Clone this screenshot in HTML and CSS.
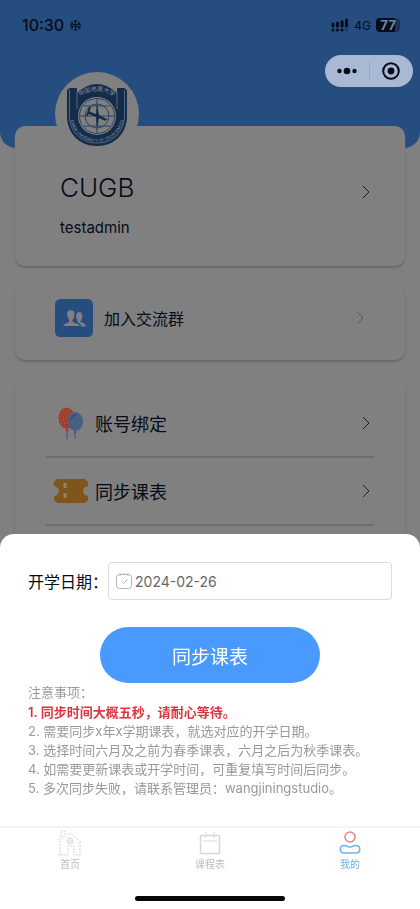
FILE: index.html
```html
<!DOCTYPE html>
<html lang="zh-CN">
<head>
<meta charset="utf-8">
<meta name="viewport" content="width=device-width, initial-scale=1">
<title>我的</title>
<link rel="stylesheet" href="styles.css">
</head>
<body>
<div class="app">
  <main class="page">
    <header class="hero">
      <div class="status">
        <div class="status-group">
          <span class="clock">10:30</span>
          <svg class="snow" viewBox="0 0 14 14" aria-hidden="true"><path d="M7 1v12M1.800 4l10.400 6M12.200 4L1.800 10M5 1.500l2 2 2-2M5 12.500l2-2 2 2M1 6.500L4 6 3 3M13 7.500L10 8l1 3M1 7.500L4 8l-1 3M13 6.500L10 6l1-3"/></svg>
        </div>
        <div class="status-group">
          <svg class="signal" viewBox="0 0 18 14" aria-hidden="true"><path d="M2 6v2M6.500 5v3M11 3.500V8M15.500 2v6"/><path d="M2 12v.1M6.500 12v.1M11 12v.1"/><path class="faint" d="M15.500 12v.1"/></svg>
          <span class="network">4G</span>
          <span class="battery">77</span>
        </div>
      </div>
    </header>

    <section class="card profile">
      <svg class="avatar" viewBox="0 0 84 84" role="img" aria-label="校徽">
        <defs>
          <path id="arc-top" d="M23 26Q42 12 61 26"/>
          <path id="arc-bottom" d="M15 43A27 27 0 0 0 69 43"/>
        </defs>
        <circle class="disc" cx="42" cy="42" r="42"/>
        <path class="navy" d="M12 18l3-2h7v5q20-18 40 0v-5h7l3 2v26c0 17-12 30-30 30S12 61 12 44z"/>
        <path class="trim" d="M14.500 18v26c0 15 11 27 27.500 27s27.500-12 27.500-27V18M22 20v17M62 20v17"/>
        <circle class="disc" cx="42" cy="44" r="19"/>
        <g class="globe">
          <circle cx="42" cy="44" r="17.500"/><circle cx="42" cy="44" r="12"/>
          <path d="M25 44h34M29 34h26M29 54h26M42 27v34"/>
        </g>
        <path class="navy" d="M42 32l2 11 10 5-10-2-2 11-1-12-9-4 9 1z"/>
        <path class="hammer" d="M33 40l18 8M35 35l-3 9"/>
        <text class="seal-cn"><textPath href="#arc-top" startOffset="50%">中国地质大学</textPath></text>
        <text class="seal-en"><textPath href="#arc-bottom" startOffset="50%">CHINA UNIVERSITY OF GEOSCIENCES</textPath></text>
      </svg>
      <div class="identity">
        <h1 class="name">CUGB</h1>
        <p class="account">testadmin</p>
      </div>
      <svg class="chevron" viewBox="0 0 10 16" aria-hidden="true"><path d="M2 2l6 6-6 6"/></svg>
    </section>

    <a class="card group" href="#">
      <svg class="people" viewBox="0 0 36 36" aria-hidden="true"><rect width="36" height="36" rx="5"/><path d="M22 20c2 3 7 2 7 6h-4c0-2-2-3-4-4zM20 16c0-5 6-5 6 0 0 2-1 3-1 4-1 2-4 2-4 0 0-1-1-2-1-4z"/><path class="cut" d="M7 26c0-4 7-3 6-6-2-2-2-4-2-6 0-5 8-5 8 0 0 2 0 4-2 6-1 3 7 2 7 6z"/></svg>
      <span>加入交流群</span>
      <svg class="chevron pale" viewBox="0 0 10 16" aria-hidden="true"><path d="M2 2l6 6-6 6"/></svg>
    </a>

    <nav class="card menu">
      <a class="row" href="#">
        <svg class="row-icon" viewBox="0 0 34 34" aria-hidden="true"><path class="string" d="M13 24v9M21 24v9"/><ellipse class="red" cx="12.500" cy="12" rx="8" ry="10.500"/><path class="red" d="M13 21l-2 4h4z"/><path class="dots" d="M9 5h8M7 8h12M6 11h13M6 14h12M7 17h11"/><ellipse class="steel" cx="21.500" cy="15.500" rx="7.500" ry="9.500"/><path class="steel" d="M21 24l-2 3h4z"/><path class="shine" d="M17 14q1-5 5-5"/></svg>
        <span>账号绑定</span>
        <svg class="chevron" viewBox="0 0 10 16" aria-hidden="true"><path d="M2 2l6 6-6 6"/></svg>
      </a>
      <a class="row" href="#">
        <svg class="row-icon" viewBox="0 0 34 34" aria-hidden="true"><path class="ticket" d="M3 5h28l3 3v4q-5 1-5 5t5 5v4l-3 3H3l-3-3v-4q5-1 5-5t-5-5V8z"/><path class="perforation" d="M11 9v6M11 19v6"/></svg>
        <span>同步课表</span>
        <svg class="chevron" viewBox="0 0 10 16" aria-hidden="true"><path d="M2 2l6 6-6 6"/></svg>
      </a>
    </nav>
  </main>

  <div class="capsule">
    <button class="capsule-button" type="button" aria-label="更多"><svg viewBox="0 0 20 20"><circle cx="2.500" cy="10" r="2.200"/><circle cx="10" cy="10" r="3.300"/><circle cx="17.500" cy="10" r="2.200"/></svg></button>
    <button class="capsule-button" type="button" aria-label="关闭"><svg viewBox="0 0 20 20"><circle class="ring" cx="10" cy="10" r="7.800"/><circle cx="10" cy="10" r="3.400"/></svg></button>
  </div>

  <div class="overlay">
    <form class="sheet">
      <div class="date-row">
        <label for="start-date">开学日期：</label>
        <div class="date-field">
          <svg viewBox="0 0 18 18" aria-hidden="true"><rect x="1.500" y="2.500" width="15" height="14" rx="3"/><path d="M5 1v3M9 1v2M13 1v3M6.500 9.500l2 2 4-4"/></svg>
          <input id="start-date" type="text" value="2024-02-26">
        </div>
      </div>
      <button class="submit" type="button">同步课表</button>
      <div class="notes">
        <p>注意事项：</p>
        <p class="warn">1. 同步时间大概五秒，请耐心等待。</p>
        <p>2. 需要同步x年x学期课表，就选对应的开学日期。</p>
        <p>3. 选择时间六月及之前为春季课表，六月之后为秋季课表。</p>
        <p>4. 如需要更新课表或开学时间，可重复填写时间后同步。</p>
        <p>5. 多次同步失败，请联系管理员：wangjiningstudio。</p>
      </div>
    </form>
    <nav class="tabs">
      <a class="tab" href="#">
        <svg viewBox="0 0 26 26" aria-hidden="true"><path stroke-dasharray="2 1" d="M3 25V11L13 3l11 9M23 12v13h-6v-9h-6v9H1M1 10l5-4M4 7V1h4v4M13 8v6M10 11h6"/><circle cx="13" cy="11" r="3"/></svg>
        <span>首页</span>
      </a>
      <a class="tab" href="#">
        <svg viewBox="0 0 26 26" aria-hidden="true"><rect x="3.500" y="5.500" width="19" height="18" rx="1"/><path d="M9 2v6M17 2v6M6 11h14"/></svg>
        <span>课程表</span>
      </a>
      <a class="tab active" href="#">
        <svg viewBox="0 0 26 26" aria-hidden="true"><circle class="head" cx="13" cy="7" r="5"/><path d="M7 15.500c3 0 3 1.500 6 1.500s3-1.500 6-1.500c5 0 5 7.500 0 7.500H7c-5 0-5-7.500 0-7.500z"/></svg>
        <span>我的</span>
      </a>
    </nav>
    <div class="home-bar"><span></span></div>
  </div>
</div>
</body>
</html>
```
FILE: styles.css
```css
* { box-sizing: border-box; }

body {
  margin: 0;
  background: #808080;
  color: #050c18;
  font-family: Inter, "Noto Sans CJK SC", sans-serif;
}

h1, p { margin: 0; }
a { color: inherit; text-decoration: none; }
button, input { font: inherit; border: 0; padding: 0; background: none; }
svg { display: block; flex: none; fill: none; }

.app { position: relative; min-height: 100vh; }

.hero {
  height: 148px;
  padding: 13px 20px 0 22px;
  background: #264d80;
  border-radius: 0 0 16px 16px;
}

.status, .status-group { display: flex; align-items: center; }
.status { justify-content: space-between; height: 24px; }
.status-group { gap: 5px; }
.clock { font-size: 16px; font-weight: 500; }
.snow { width: 13px; height: 13px; stroke: #050c18; stroke-width: 1; }
.signal { width: 18px; height: 14px; stroke: #050c18; stroke-width: 3; stroke-linecap: round; }
.signal .faint { stroke: #1d3a62; }
.network { font-size: 12px; }
.battery {
  width: 24px;
  border-radius: 4px;
  background: linear-gradient(90deg, #050c18 80%, #1a3458 80%);
  color: #6d86aa;
  font-size: 13px;
  font-weight: 700;
  line-height: 14px;
  text-align: center;
}

.card {
  display: flex;
  align-items: center;
  margin: 0 15px 15px;
  border-radius: 10px;
  background: #808080;
  box-shadow: 0 2px 2px #696969;
}

.profile {
  position: relative;
  justify-content: space-between;
  height: 140px;
  margin-top: -22px;
  padding: 0 34px 8px 45px;
}
.avatar { position: absolute; left: 40px; top: -54px; width: 84px; height: 84px; }
.disc { fill: #808080; }
.navy { fill: #152b4a; }
.trim { stroke: #526884; stroke-width: 1; }
.globe { stroke: #284665; stroke-width: 1; }
.hammer { stroke: #152b4a; stroke-width: 2; }
.seal-cn, .seal-en { fill: #8796a8; text-anchor: middle; }
.seal-cn { font-size: 6px; }
.seal-en { font-size: 4px; }

.identity { padding-top: 24px; }
.name { font-size: 26px; font-weight: 300; line-height: 40px; }
.account { margin-top: 8px; font-size: 15px; line-height: 24px; }

.chevron { width: 10px; height: 16px; stroke: #10243e; stroke-width: 1; }
.chevron.pale { stroke: #4b596c; }

.group { height: 79px; padding: 0 40px 5px; gap: 11px; font-size: 16px; }
.group .chevron, .row .chevron { margin-left: auto; }
.people { width: 38px; height: 38px; fill: #808080; }
.people rect { fill: #264d80; }
.people .cut { stroke: #264d80; stroke-width: 1; }

.menu { display: block; padding: 15px 31px 40px; }
.row {
  display: flex;
  align-items: center;
  gap: 7px;
  height: 68px;
  padding: 0 3px 0 8px;
  border-bottom: 2px solid #6d6d6d;
  font-size: 18px;
}
.row-icon { width: 34px; height: 34px; }
.string { stroke: #40566d; stroke-width: 1; }
.red { fill: #9c3e30; }
.dots { stroke: #d85142; stroke-width: 1; stroke-dasharray: 1 2; }
.steel { fill: #456080; }
.shine { stroke: #254871; stroke-width: 1; }
.ticket { fill: #80551a; }
.perforation { stroke: #8b8477; stroke-width: 3; stroke-dasharray: 5 1; }

.capsule {
  position: absolute;
  top: 55px;
  right: 7px;
  display: flex;
  width: 88px;
  height: 32px;
  border-radius: 16px;
  background: linear-gradient(#9aa9c3, #9aa9c3) center / 1px 18px no-repeat #a9b8d3;
}
.capsule-button { flex: 1; display: grid; place-items: center; }
.capsule svg { width: 20px; height: 20px; fill: #050c18; }
.capsule .ring { fill: none; stroke: #050c18; stroke-width: 2; }

.overlay { position: fixed; left: 0; right: 0; bottom: 0; background: #fff; border-radius: 14px 14px 0 0; }

.sheet { padding: 28px 28px; }
.date-row { display: flex; align-items: center; font-size: 16px; color: #050c18; }
.date-field {
  flex: 1;
  display: flex;
  align-items: center;
  gap: 2px;
  height: 38px;
  padding: 0 6px;
  border: 1px solid #dcdcdc;
  border-radius: 4px;
}
.date-field svg { width: 18px; height: 18px; stroke: #b5b5b5; stroke-width: 1; }
.date-field input { flex: 1; min-width: 0; color: #666; font-size: 14px; outline: 0; }

.submit {
  display: block;
  width: 220px;
  height: 56px;
  margin: 27px auto 0;
  border-radius: 28px;
  background: #4a99ff;
  color: #fff;
  font-size: 19px;
}

.notes { color: #999; font-size: 13px; line-height: 19px; white-space: nowrap; }
.notes .warn { margin-top: 1px; color: #dc3540; font-weight: 600; }

.tabs { display: flex; border-top: 2px solid #f4f4f4; }
.tab {
  flex: 1;
  display: flex;
  flex-direction: column;
  align-items: center;
  padding-top: 2px;
  color: #bdbdbd;
  font-size: 10px;
  line-height: 14px;
}
.tab svg { width: 26px; height: 26px; margin-bottom: 1px; stroke: #d6d6d6; stroke-width: 1; }
.tab svg rect { stroke-width: 1.5; }
.tab.active { color: #6db2e2; }
.tab.active svg { stroke: #6db2e8; stroke-width: 1.5; }
.tab.active .head { stroke: #e98282; }

.home-bar { display: flex; justify-content: center; padding: 25px 0 8px; }
.home-bar span { width: 150px; height: 5px; border-radius: 3px; background: #050608; }
```
